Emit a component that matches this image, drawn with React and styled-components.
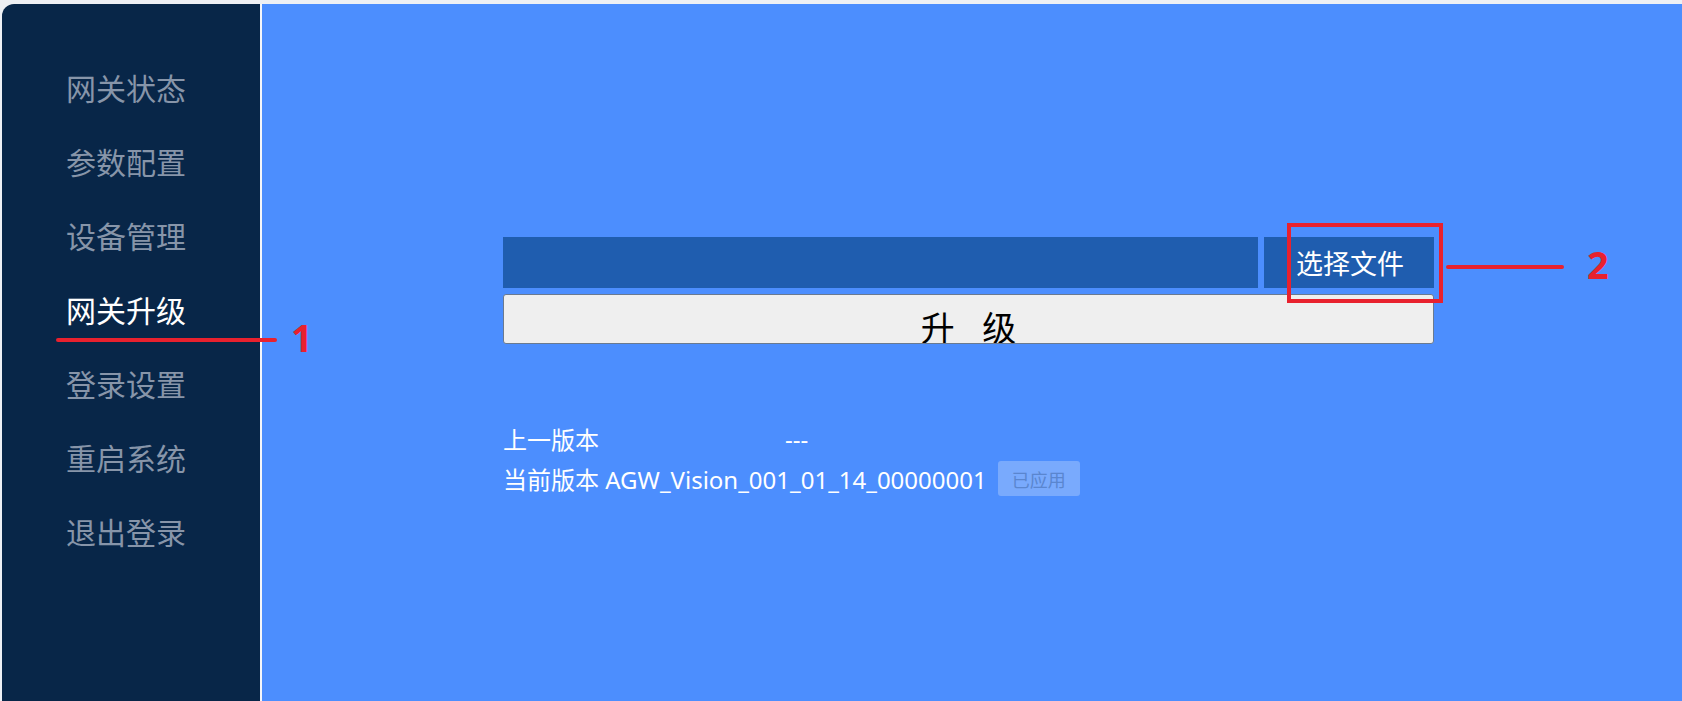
import styled, { createGlobalStyle } from 'styled-components';

const menuItems = [
  '网关状态',
  '参数配置',
  '设备管理',
  '网关升级',
  '登录设置',
  '重启系统',
  '退出登录',
];

export default function App() {
  return (
    <>
      <GlobalStyle />
      <Shell>
        <Sidebar>
          <Menu>
            {menuItems.map((item) => (
              <MenuItem key={item} $active={item === '网关升级'}>
                {item}
              </MenuItem>
            ))}
          </Menu>
        </Sidebar>
        <Main>
          <UpgradePanel>
            <UploadRow>
              <FileField />
              <ChooseButton>选择文件</ChooseButton>
            </UploadRow>
            <UpgradeButton>升 级</UpgradeButton>
          </UpgradePanel>
          <VersionInfo>
            <VersionRow>
              <VersionLabel>上一版本</VersionLabel>
              <span>---</span>
            </VersionRow>
            <VersionRow $tall>
              当前版本 AGW_Vision_001_01_14_00000001
              <AppliedTag>已应用</AppliedTag>
            </VersionRow>
          </VersionInfo>
        </Main>

        {/* red annotations drawn over the page */}
        <Underline />
        <Marker $left={291} $top={318}>1</Marker>
        <HighlightBox />
        <Pointer />
        <Marker $left={1587} $top={245}>2</Marker>
      </Shell>
    </>
  );
}

const GlobalStyle = createGlobalStyle`
  body {
    margin: 0;
    background: #eef0f4;
    font-family: "Noto Sans", "Noto Sans CJK SC", sans-serif;
    overflow: hidden;
  }
`;

const Shell = styled.div`
  position: relative;
  display: flex;
  min-height: 100vh;
  padding: 4px 0 0 2px;
  box-sizing: border-box;
`;

const Sidebar = styled.aside`
  width: 260px;
  flex-shrink: 0;
  background: #082648;
  border-right: 2px solid #f4f6fa;
  border-top-left-radius: 12px;
  padding: 68px 0 0 64px;
  box-sizing: border-box;
`;

const Menu = styled.nav`
  display: flex;
  flex-direction: column;
  gap: 44px;
`;

const MenuItem = styled.div`
  font-family: "Noto Sans CJK SC", sans-serif;
  font-size: 30px;
  line-height: 30px;
  color: ${(p) => (p.$active ? '#ffffff' : '#8795a9')};
  white-space: nowrap;
`;

const Main = styled.main`
  flex: 1;
  background: #4c8efe;
  padding: 233px 0 0 241px;
`;

const UpgradePanel = styled.div`
  width: 931px;
  display: flex;
  flex-direction: column;
  gap: 6px;
`;

const UploadRow = styled.div`
  display: flex;
  gap: 6px;
  height: 51px;
`;

const FileField = styled.div`
  flex: 1;
  background: #1f5daf;
`;

const ChooseButton = styled.div`
  width: 170px;
  background: #1f5daf;
  color: #ffffff;
  font-family: "Noto Sans CJK SC", sans-serif;
  font-size: 27px;
  line-height: 51px;
  padding-left: 32px;
  box-sizing: border-box;
  white-space: nowrap;
`;

const UpgradeButton = styled.div`
  height: 50px;
  box-sizing: border-box;
  background: #efefef;
  border: 1px solid #6a7a90;
  border-radius: 3px;
  overflow: hidden;
  text-align: center;
  color: #000000;
  font-family: "Noto Sans CJK SC", sans-serif;
  font-size: 34px;
  line-height: 34px;
  padding: 15px 0 0 10px;
  letter-spacing: 10px;
  white-space: pre;
`;

const VersionInfo = styled.div`
  margin-top: 79px;
  color: #ffffff;
  font-size: 24px;
  display: flex;
  flex-direction: column;
  gap: 5px;
`;

const VersionRow = styled.div`
  display: flex;
  align-items: center;
  height: ${(p) => (p.$tall ? '41px' : '30px')};
  white-space: pre;
`;

const VersionLabel = styled.span`
  width: 282px;
`;

const AppliedTag = styled.span`
  margin-left: 11px;
  width: 82px;
  height: 35px;
  border-radius: 3px;
  background: #79aafd;
  color: #5a86cf;
  font-family: "Noto Sans CJK SC", sans-serif;
  font-size: 18px;
  display: flex;
  align-items: center;
  justify-content: center;
`;

const Underline = styled.div`
  position: absolute;
  left: 56px;
  top: 338px;
  width: 221px;
  height: 4px;
  border-radius: 2px;
  background: #e8212e;
`;

const HighlightBox = styled.div`
  position: absolute;
  left: 1287px;
  top: 223px;
  width: 156px;
  height: 80px;
  box-sizing: border-box;
  border: 4px solid #e8212e;
`;

const Pointer = styled.div`
  position: absolute;
  left: 1446px;
  top: 265px;
  width: 118px;
  height: 4px;
  border-radius: 2px;
  background: #e8212e;
`;

const Marker = styled.div`
  position: absolute;
  left: ${(p) => p.$left}px;
  top: ${(p) => p.$top}px;
  font-family: "Noto Sans", sans-serif;
  font-weight: 700;
  font-size: 38px;
  line-height: 38px;
  color: #e8212e;
`;
